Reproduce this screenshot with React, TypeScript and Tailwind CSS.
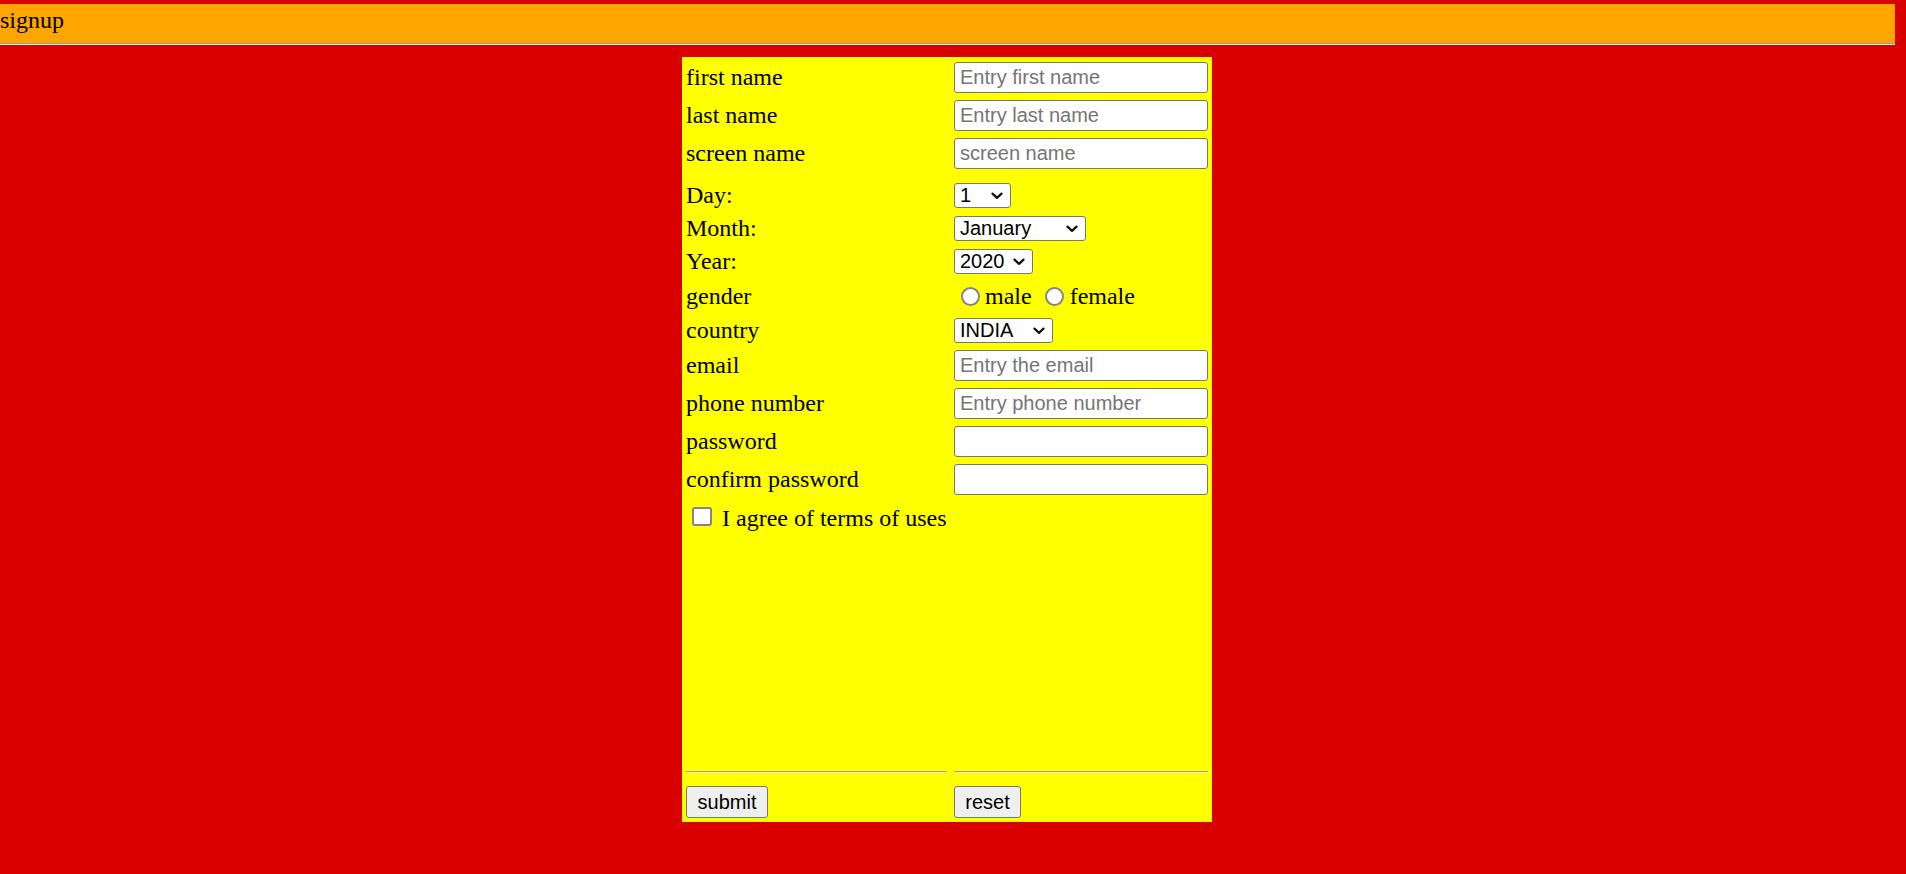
import { useState } from 'react';

function Chevron() {
  return (
    <svg viewBox="0 0 12 8" className="w-[12px] h-[8px]" fill="none" stroke="#111" strokeWidth="2.2" strokeLinecap="round" strokeLinejoin="round">
      <path d="M1.5 1.6l4.5 4.3 4.5-4.3" />
    </svg>
  );
}

function Dropdown({ options, className }: { options: string[]; className: string }) {
  return (
    <div className={`relative h-[25px] ${className}`}>
      <select className="appearance-none w-full h-[25px] border border-[#767676] rounded-[3px] bg-white pl-[5px] text-[20px] leading-[23px] font-['Liberation_Sans',Arial,sans-serif] text-black outline-none">
        {options.map((o) => (
          <option key={o}>{o}</option>
        ))}
      </select>
      <span className="pointer-events-none absolute right-[8px] top-[9px] flex">
        <Chevron />
      </span>
    </div>
  );
}

function Field({ placeholder, type = 'text' }: { placeholder?: string; type?: string }) {
  return (
    <input
      type={type}
      placeholder={placeholder}
      className="w-full h-[31px] border border-[#767676] rounded-[3px] bg-white px-[5px] text-[20px] font-['Liberation_Sans',Arial,sans-serif] text-black placeholder:text-[#757575] outline-none"
    />
  );
}

const label = "font-['Liberation_Serif','Times_New_Roman',serif] text-[24px] leading-[27px] text-black whitespace-nowrap";

export default function App() {
  const [gender, setGender] = useState('');
  const days = Array.from({ length: 31 }, (_, i) => String(i + 1));
  const months = ['January', 'February', 'March', 'April', 'May', 'June', 'July', 'August', 'September', 'October', 'November', 'December'];
  const years = Array.from({ length: 50 }, (_, i) => String(2020 - i));

  return (
    <div className="min-h-screen bg-[#d90000] pt-[4px]">
      {/* header bar */}
      <div className={`w-[1895px] h-[39px] bg-[#ffa500] pt-[3px] ${label}`}>signup</div>
      <div className="w-[1895px] h-[2px] border-t border-b border-t-[#9a9a9a] border-b-[#eeeeee]" />

      {/* form table */}
      <form className="ml-[682px] mt-[12px] w-[530px] h-[765px] bg-[#ffff00] px-[4px] pt-[5px] pb-[4px] flex flex-col">
        <div className="grid grid-cols-[260px_254px] gap-x-[8px] items-center h-[31px]">
          <span className={label}>first name</span>
          <Field placeholder="Entry first name" />
        </div>
        <div className="grid grid-cols-[260px_254px] gap-x-[8px] items-center h-[31px] mt-[7px]">
          <span className={label}>last name</span>
          <Field placeholder="Entry last name" />
        </div>
        <div className="grid grid-cols-[260px_254px] gap-x-[8px] items-center h-[31px] mt-[7px]">
          <span className={label}>screen name</span>
          <Field placeholder="screen name" />
        </div>

        <div className="grid grid-cols-[260px_254px] gap-x-[8px] items-center h-[25px] mt-[13px]">
          <span className={label}>Day:</span>
          <Dropdown options={days} className="w-[57px]" />
        </div>
        <div className="grid grid-cols-[260px_254px] gap-x-[8px] items-center h-[25px] mt-[8px]">
          <span className={label}>Month:</span>
          <Dropdown options={months} className="w-[132px]" />
        </div>
        <div className="grid grid-cols-[260px_254px] gap-x-[8px] items-center h-[25px] mt-[8px]">
          <span className={label}>Year:</span>
          <Dropdown options={years} className="w-[79px]" />
        </div>

        <div className="grid grid-cols-[260px_254px] gap-x-[8px] items-end h-[30px] mt-[8px] pb-[1px]">
          <span className={label}>gender</span>
          <div className="flex items-end">
            <input
              type="radio"
              name="gender"
              checked={gender === 'male'}
              onChange={() => setGender('male')}
              className="appearance-none ml-[7px] mb-[4px] w-[19px] h-[19px] rounded-full border-2 border-[#858585] bg-white"
            />
            <span className={`${label} ml-[5px]`}>male</span>
            <input
              type="radio"
              name="gender"
              checked={gender === 'female'}
              onChange={() => setGender('female')}
              className="appearance-none ml-[13px] mb-[4px] w-[19px] h-[19px] rounded-full border-2 border-[#858585] bg-white"
            />
            <span className={`${label} ml-[6px]`}>female</span>
          </div>
        </div>

        <div className="grid grid-cols-[260px_254px] gap-x-[8px] items-center h-[25px] mt-[6px]">
          <span className={label}>country</span>
          <Dropdown options={['INDIA', 'USA', 'UK', 'CANADA']} className="w-[99px]" />
        </div>

        <div className="grid grid-cols-[260px_254px] gap-x-[8px] items-center h-[31px] mt-[8px]">
          <span className={label}>email</span>
          <Field placeholder="Entry the email" type="email" />
        </div>
        <div className="grid grid-cols-[260px_254px] gap-x-[8px] items-center h-[31px] mt-[7px]">
          <span className={label}>phone number</span>
          <Field placeholder="Entry phone number" type="tel" />
        </div>
        <div className="grid grid-cols-[260px_254px] gap-x-[8px] items-center h-[31px] mt-[7px]">
          <span className={label}>password</span>
          <Field type="password" />
        </div>
        <div className="grid grid-cols-[260px_254px] gap-x-[8px] items-center h-[31px] mt-[7px]">
          <span className={label}>confirm password</span>
          <Field type="password" />
        </div>

        <div className="flex items-end h-[28px] mt-[7px]">
          <input
            type="checkbox"
            className="appearance-none ml-[6px] mb-[4px] w-[20px] h-[19px] rounded-[3px] border-2 border-[#858585] bg-white"
          />
          <span className={`${label} ml-[10px] translate-y-[2px]`}>I agree of terms of uses</span>
        </div>

        {/* rules + buttons at the bottom */}
        <div className="grid grid-cols-[260px_254px] gap-x-[8px] mt-auto">
          <div className="h-[2px] border-t border-b border-t-[#9a9a9a] border-b-[#f4f4c0]" />
          <div className="h-[2px] border-t border-b border-t-[#9a9a9a] border-b-[#f4f4c0]" />
        </div>
        <div className="grid grid-cols-[260px_254px] gap-x-[8px] mt-[13px] h-[32px]">
          <div>
            <button type="submit" className="h-[32px] w-[82px] border border-[#767676] rounded-[3px] bg-[#efefef] text-[20px] font-['Liberation_Sans',Arial,sans-serif] text-black">
              submit
            </button>
          </div>
          <div>
            <button type="reset" className="h-[32px] w-[67px] border border-[#767676] rounded-[3px] bg-[#efefef] text-[20px] font-['Liberation_Sans',Arial,sans-serif] text-black">
              reset
            </button>
          </div>
        </div>
      </form>
    </div>
  );
}
